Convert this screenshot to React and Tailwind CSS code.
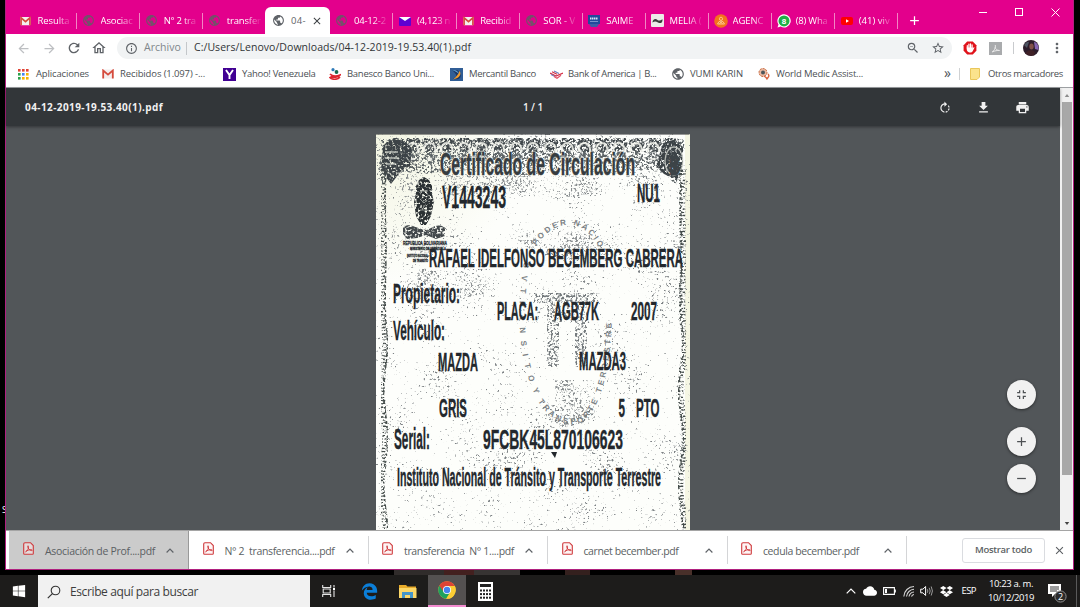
import { useLayoutEffect, useRef, useState } from "react";
import {
  MdPublic, MdRefresh, MdArrowBack, MdArrowForward, MdOutlineHome, MdInfoOutline, MdZoomOut,
  MdStarBorder, MdMoreVert, MdRotateRight, MdFileDownload, MdPrint, MdFullscreenExit, MdAdd,
  MdRemove, MdClose, MdCloud,
} from "react-icons/md";
import { FaDropbox, FaWindows, FaEdgeLegacy } from "react-icons/fa";

function Fit({ w, className = "", children }) {
  const ref = useRef(null);
  const [sp, setSp] = useState(0);
  useLayoutEffect(() => {
    const natural = ref.current.getBoundingClientRect().width;
    const n = ref.current.textContent.length;
    setSp((w - natural) / n);
  }, [w]);
  return (
    <span ref={ref} className={"inline-block shrink-0 whitespace-pre " + className} style={{ letterSpacing: sp + "px" }}>
      {children}
    </span>
  );
}

const Gmail = ({ className }) => (
  <svg viewBox="0 0 12 10" className={className}>
    <rect x="0.5" y="0.5" width="11" height="9" rx="1" fill="#f4eeee" />
    <path d="M1.2 9.5V1.5L6 5.6l4.800-4.100v8" fill="none" stroke="#d54b3d" strokeWidth="1.8" />
  </svg>
);
const Globe = ({ className }) => <MdPublic className={className} />;
const Mail = () => (
  <svg viewBox="0 0 12 10" className="h-[10px] w-3">
    <rect y="1" width="12" height="9" rx="1" fill="#5f01d1" />
    <path d="M0 1h12L6 5z" fill="#fff" />
  </svg>
);
const Saime = () => (
  <svg viewBox="0 0 12 12" className="h-3 w-3">
    <rect width="12" height="9" fill="#214a9c" />
    <path d="M1 9h10L9 12H3z" fill="#3c5da8" />
    <path d="M2 3.500h8" stroke="#d7e1f5" strokeWidth="1.800" strokeDasharray="1.5 .5" />
    <path d="M2 6.500h8" stroke="#8fa6d6" strokeWidth=".8" />
  </svg>
);
const Melia = () => (
  <svg viewBox="0 0 13 13" className="h-[13px] w-[13px]">
    <rect width="13" height="13" rx="1" fill="#eceae8" />
    <path d="M1.500 8.500c0-3 3-4.500 5-2.500 1.500 1.200 3 .5 5-.8 .3 3.500-2 4.800-4.500 3.300-2-1.200-3.500-1.500-5.500 0z" fill="#3a3a3a" />
  </svg>
);
const Agenc = () => (
  <svg viewBox="0 0 14 14" className="h-[14px] w-[14px]">
    <circle cx="7" cy="7" r="6.800" fill="#f4731c" />
    <circle cx="7" cy="4.800" r="1.600" fill="none" stroke="#fbc48b" />
    <path d="M3.500 10q1-3 3.500-3t3.500 3zM5.500 10l1.500-2 1.500 2" stroke="#fbc48b" fill="none" />
  </svg>
);
const Whats = () => (
  <svg viewBox="0 0 14 14" className="h-[14px] w-[14px]">
    <path d="M7 .3a6.600 6.600 0 1 1-3.200 12.300L.5 13.500l1-3A6.600 6.600 0 0 1 7 .3z" fill="#fff" />
    <circle cx="7" cy="6.900" r="5.500" fill="#1fae46" />
    <text x="7" y="9.700" textAnchor="middle" fontSize="8" fontWeight="700" fill="#fff" fontFamily="Liberation Sans, sans-serif">8</text>
  </svg>
);
const Tube = () => (
  <svg viewBox="0 0 12 10" className="h-[10px] w-3">
    <rect y="1" width="12" height="8" rx="2" fill="#f00" />
    <path d="M5 3.200v3.600L8 5z" fill="#fff" />
  </svg>
);

const grayGlobe = <Globe className="h-[13px] w-[13px] text-[#74506a]" />;
const tabs = [
  { icon: <Gmail className="h-[10px] w-[11px]" />, text: "Resulta", w: 32 },
  { icon: grayGlobe, text: "Asociac", w: 32 },
  { icon: grayGlobe, text: "N° 2 tra", w: 32 },
  { icon: grayGlobe, text: "transfer", w: 34 },
  { icon: <Globe className="h-[13px] w-[13px] text-[#5f6368]" />, text: "04-", w: 15, active: true },
  { icon: grayGlobe, text: "04-12-2", w: 32 },
  { icon: <Mail />, text: "(4,123 n", w: 33 },
  { icon: <Gmail className="h-[10px] w-[11px]" />, text: "Recibid", w: 31 },
  { icon: grayGlobe, text: "SOR - V", w: 32 },
  { icon: <Saime />, text: "SAIME", w: 27 },
  { icon: <Melia />, text: "MELIA (", w: 32 },
  { icon: <Agenc />, text: "AGENC", w: 31 },
  { icon: <Whats />, text: "(8) Wha", w: 32 },
  { icon: <Tube />, text: "(41) viv", w: 31 },
];

function Tab({ t, divider }) {
  if (t.active)
    return (
      <div className="-ml-px flex h-[27px] w-[65.1px] shrink-0 items-center rounded-t-[6px] bg-white pl-[7px]">
        {t.icon}
        <div className="ml-[6px] w-4 overflow-hidden text-[#5f6368]">
          <Fit w={t.w}>{t.text}</Fit>
        </div>
        <MdClose className="ml-[4px] h-[12px] w-[12px] text-[#3c4043]" />
      </div>
    );
  return (
    <div className="flex h-[27px] w-[63.1px] shrink-0 items-center pl-[5px]">
      <div className="flex w-[14px] shrink-0 justify-center">{t.icon}</div>
      <div className="ml-[5px] w-[34px] shrink-0 overflow-hidden text-white [mask-image:linear-gradient(to_right,#000_55%,rgba(0,0,0,.15)_95%)]">
        <Fit w={t.w}>{t.text}</Fit>
      </div>
      {divider && <div className="ml-[4.500px] h-4 w-px bg-[#f285c4]" />}
    </div>
  );
}

const bookmarks = [
  {
    icon: (
      <svg viewBox="0 0 11 11" className="h-[11px] w-[11px]">
        {["#e04437", "#e04437", "#e04437", "#2ba24c", "#4285f4", "#f4b400", "#2ba24c", "#f4b400", "#f4b400"].map((c, i) => (
          <rect key={i} x={(i % 3) * 4} y={Math.floor(i / 3) * 4} width="2.600" height="2.600" fill={c} />
        ))}
      </svg>
    ), x: 18, tx: 36, text: "Aplicaciones", w: 53,
  },
  { icon: <Gmail className="h-[10px] w-3" />, x: 101.500, tx: 120, text: "Recibidos (1.097) -...", w: 85 },
  {
    icon: (
      <svg viewBox="0 0 13 13" className="h-[13px] w-[13px]">
        <rect width="13" height="13" fill="#410093" />
        <path d="M3 2l3.500 5L10 2M6.500 7v4" stroke="#fff" strokeWidth="1.900" fill="none" />
      </svg>
    ), x: 222.500, tx: 242, text: "Yahoo! Venezuela", w: 73.500,
  },
  {
    icon: (
      <svg viewBox="0 0 12 12" className="h-3 w-3">
        <circle cx="4" cy="1.700" r="1.600" fill="#2e7ab8" />
        <circle cx="7.500" cy="4" r="1.900" fill="#17694e" />
        <path d="M1 6c2 2 6 2.500 10 1-1 2-7 3-9.500 1.500M.5 9c2 3 8 3 10.500 0" stroke="#dd2730" strokeWidth="1.700" fill="none" />
      </svg>
    ), x: 329, tx: 347, text: "Banesco Banco Uni...", w: 87,
  },
  {
    icon: (
      <svg viewBox="0 0 13 13" className="h-[13px] w-[13px]">
        <rect width="13" height="13" fill="#315e96" />
        <path d="M2 2h5c3 2 5 5 3 8-2 2-5 1-7 1 3-2 5-3 1-7z" fill="#1c3764" />
        <path d="M9.500 3c2.300 3 .5 7-6.500 8.500 3-2.500 5-4.500 6.500-8.500z" fill="#f19a2c" />
        <path d="M2 2c4-.5 6 1 7 4-2-2-4-3-7-4z" fill="#5ba0d8" />
      </svg>
    ), x: 449.500, tx: 469, text: "Mercantil Banco", w: 67,
  },
  {
    icon: (
      <svg viewBox="0 0 13 9" className="h-[9px] w-[13px]">
        <path d="M0 3l6 3 7-3M2 1.800l5 2.500" stroke="#d42f45" strokeWidth="1.200" fill="none" />
        <path d="M4 1l5 2.500M1 4.500l4 2" stroke="#6c7fb8" strokeWidth="1.100" />
        <path d="M4 6.500l3 1.800 4-3" stroke="#e0546a" strokeWidth="1.200" fill="none" />
      </svg>
    ), x: 549.500, tx: 568, text: "Bank of America | B...", w: 88.500,
  },
  { icon: <Globe className="h-[14px] w-[14px] text-[#5f6368]" />, x: 670.500, tx: 690, text: "VUMI KARIN", w: 53 },
  {
    icon: (
      <svg viewBox="0 0 12 12" className="h-3 w-3">
        <circle cx="5" cy="4.500" r="4" fill="#e8b7a0" stroke="#c8683c" strokeDasharray="2 1" />
        <circle cx="5" cy="4.500" r="2" fill="#4d575b" />
        <path d="M6 8l4 3M10 6c2 2 0 4-2 5" stroke="#d96643" strokeWidth="1.400" fill="none" />
      </svg>
    ), x: 757.500, tx: 776, text: "World Medic Assist...", w: 87,
  },
];

function Bookmark({ b, prevEnd }) {
  return (
    <div className="flex shrink-0 items-center" style={{ paddingLeft: b.x - prevEnd }}>
      <div className="flex shrink-0 items-center" style={{ width: b.tx - b.x }}>{b.icon}</div>
      <Fit w={b.w}>{b.text}</Fit>
    </div>
  );
}

const Pdf = () => (
  <svg viewBox="0 0 11 13" className="h-[13px] w-[11px] shrink-0">
    <path d="M2 .7h5.500L10.300 3.500v8q0 .8-.8.8H1.500q-.8 0-.8-.8V2q0-1.300 1.300-1.300z" fill="#fdeaea" fillOpacity=".5" stroke="#cf3a3d" strokeWidth="1.100" />
    <path d="M2.500 10c1.800-.9 3.200-3.500 3-5.500-.1-1.200-1-1-.8 0C5 6.500 6.500 8.500 8.700 8.600c.8 0 .8-1-.5-.9-2 0-4 .7-5.500 1.700" fill="none" stroke="#cf3a3d" strokeWidth=".9" />
  </svg>
);
const Up = () => (
  <svg viewBox="0 0 8 5" className="h-[5px] w-2 shrink-0"><path d="M.6 4.500L4 1.100l3.400 3.400" fill="none" stroke="#5f6368" strokeWidth="1.200" /></svg>
);
const downloads = [
  { text: "Asociación de Prof....pdf", w: 110, active: true },
  { text: "N° 2  transferencia....pdf", w: 110 },
  { text: "transferencia  N° 1....pdf", w: 110 },
  { text: "carnet becember.pdf", w: 95 },
  { text: "cedula becember.pdf", w: 96 },
];

function T({ x, y, w, s, c = "#23282d", children }) {
  return (
    <text x={x} y={y} fontSize={s} textLength={w} lengthAdjust="spacingAndGlyphs" fill={c} stroke={c} strokeWidth=".35">
      {children}
    </text>
  );
}

function Noise({ id, freq, k, patch, cut, seed }) {
  return (
    <filter id={id} x="-5%" y="-5%" width="110%" height="110%" colorInterpolationFilters="sRGB">
      <feTurbulence type="fractalNoise" baseFrequency={freq} numOctaves="2" seed={seed} result="n" />
      <feColorMatrix in="n" type="matrix" values="0 0 0 0 0  0 0 0 0 0  0 0 0 0 0  1 0 0 0 0" result="fine" />
      <feTurbulence type="fractalNoise" baseFrequency="0.025" numOctaves="2" seed={seed + 20} result="l" />
      <feColorMatrix in="l" type="matrix" values="0 0 0 0 0  0 0 0 0 0  0 0 0 0 0  1 0 0 0 0" result="coarse" />
      <feComposite in="fine" in2="coarse" operator="arithmetic" k1="0" k2={k} k3={patch} k4={cut} result="m" />
      <feComposite in="SourceGraphic" in2="m" operator="in" result="o" />
      <feGaussianBlur in="o" stdDeviation="0.35" />
    </filter>
  );
}

function wavy(x, amp) {
  let d = `M${x} 170`;
  for (let y = 171; y <= 532; y += 4) {
    const k = y < 320 ? 0.2 : 1;
    d += `L${(x + amp * k * Math.sin((y - 320) / 15)).toFixed(1)} ${y}`;
  }
  return d;
}

function Certificate() {
  return (
    <svg viewBox="376 134 313.5 396" className="h-[396px] w-[313.500px]" fontFamily="'Liberation Sans Narrow','Liberation Sans',sans-serif" fontWeight="700">
      <defs>
        <Noise id="solid" freq="0.4" k={5} patch={0} cut={-1.500} seed={3} />
        <Noise id="heavy" freq="0.42" k={6} patch={0} cut={-2.5} seed={7} />
        <Noise id="mid" freq="0.45" k={6} patch={1} cut={-3.400} seed={8} />
        <Noise id="light" freq="0.42" k={7} patch={3} cut={-6.350} seed={5} />
        <Noise id="patch" freq="0.45" k={6} patch={3} cut={-5.100} seed={12} />
        <radialGradient id="aged" gradientUnits="userSpaceOnUse" cx="376" cy="134" r="150">
          <stop offset="0" stopColor="#f3f5e2" />
          <stop offset="1" stopColor="#fdfefb" />
        </radialGradient>
        <path id="oval-left" d="M524 262C513 330 523 375 540 404C551 420 565 428 582 422C602 409 613 360 612 300" />
        <path id="oval-top" d="M536 246C553 220 585 212 603 256" />
      </defs>
      <rect x="376" y="134" width="314" height="396" fill="url(#aged)" />
      <rect x="685" y="134" width="5" height="396" fill="#f5f6e4" />
      <g filter="url(#light)" fill="#7d8285">
        <rect x="376" y="134" width="314" height="396" />
      </g>
      <g filter="url(#patch)" fill="#888d8f">
        <path d="M395 174h274l-20 12-50 6-40 8-60-8-60 6-40-8zM395 205q10-14 22-8l24 30-6 30-30 6-14-20zM500 235q60-14 120 10l-10 20-60-8zM420 268q60 8 85 4l-10 20-70 12-12-14zM632 190q30 18 50 24v40q-20-20-50-36zM555 380h40v40h-40z" />
      </g>
      <g filter="url(#mid)" fill="#5c6366">
        <path d="M381 139h304l-3 22-6 24-12-12-20-4-30 5-40-4-50 5-60-5-40 4-28-3-14 14-5-20z" />
      </g>
      <g filter="url(#heavy)" fill="#41484c">
        {Array.from({ length: 17 }, (_, i) => (
          <g key={i}>
            <path d={`M${390 + i * 17.200} 138h12l2 6-4 8h-8l-4-8z`} />
            <path d={`M${396 + i * 17.200} 150l7 7-7 8-7-8z`} fill="#5f6669" />
          </g>
        ))}
      </g>
      <g fill="none" stroke="#f4f5ee" strokeWidth="1.900" opacity=".85">
        {Array.from({ length: 15 }, (_, i) => (
          <path key={i} d={`M${407 + i * 17.200} 152v-3a5.500 6 0 0 1 11 0v3M${410 + i * 17.200} 159h5`} />
        ))}
      </g>
      <g filter="url(#solid)" fill="#3c4347">
        <path d="M383 148q2-8 12-8h5q10 3 12 10l-2 16-8 4-11 14-10-14z" />
        <path d="M662 146q3-6 12-5l9 6v24l-6 9-13-6-8-8z" />
      </g>
      <g stroke="#dfe1da" strokeWidth="1.300" opacity=".75" fill="none">
        <path d="M386 152h12M385 158h14M386 164h10" />
        <ellipse cx="674" cy="161" rx="9" ry="14" />
      </g>
      <g fill="none" stroke="#454d4b">
        <path d={wavy(383.500, 2)} strokeWidth="6.500" strokeDasharray="1.600 1.600" filter="url(#heavy)" />
        <path d={wavy(385.500, 2)} strokeWidth="1.800" filter="url(#heavy)" />
        <path d={wavy(682.500, 2.500)} strokeWidth="6.500" strokeDasharray="1.600 1.600" filter="url(#heavy)" />
        <path d={wavy(681, 2.500)} strokeWidth="1.800" filter="url(#heavy)" />
      </g>
      <g fill="#2b3134" filter="url(#solid)">
        <path d="M416 186l3-6 5-3 5 3 3 6v8l2 8-3 14-5 9h-5l-5-9-2-14 2-8z" />
        <path d="M403 228q4-5 10-2l8 3 6 1 8-4q8-2 12 4l-5 2 3 4-9 3-10-4-9 3-10 1-4-5z" fill="#43494c" />
      </g>
      <g fill="none" stroke="#8e938f" strokeWidth="1">
        <path d="M420 191h8M421 200l3 3 3-3M420 210h7" />
      </g>
      <g>
        <T x={403} y={244.500} w={44} s={6}>REPUBLICA BOLIVARIANA</T>
        <T x={410} y={250} w={36} s={4}>MINISTERIO DE VENEZUELA</T>
        <T x={407} y={256.500} w={21} s={4}>INSTITUTO NACIONAL</T>
        <T x={413} y={261.500} w={15} s={3.500}>DE TRANSITO</T>
      </g>
      <g filter="url(#mid)" fill="#73797c">
        <rect x="534" y="293" width="64" height="10" />
        <rect x="547" y="303" width="12" height="64" />
        <rect x="575" y="303" width="12" height="64" />
        <rect x="555" y="310" width="23" height="12" />
        <path d="M540 412q24 18 52-4l-8 14-20 6z" />
      </g>
      <g fontSize="8" fill="#7b8184" fontWeight="700">
        <text letterSpacing="2.800"><textPath href="#oval-left"> S V   T R A N S I T O  Y TRANSPORTE TERRESTRE</textPath></text>
        <text letterSpacing="2.400"><textPath href="#oval-top">PODER NACIO</textPath></text>
      </g>
      <g stroke="#f3f4ed" strokeWidth="2.500" opacity=".55">
        <text x="440" y="175" fontSize="31" textLength="195" lengthAdjust="spacingAndGlyphs" fill="none" aria-hidden="true">Certificado de Circulación</text>
      </g>
      <T x={440} y={175} w={195} s={31} c="#363c40">Certificado de Circulación</T>
      <T x={669} y={175} w={11} s={27} c="#3d4448">B</T>
      <T x={442} y={207.500} w={64} s={32}>V1443243</T>
      <T x={637} y={201.500} w={23} s={26}>NU1</T>
      <T x={429} y={267} w={254} s={26}>RAFAEL IDELFONSO BECEMBERG CABRERA</T>
      <T x={393} y={303} w={67} s={28}>Propietario:</T>
      <T x={497} y={320} w={41} s={25}>PLACA:</T>
      <T x={554} y={319.500} w={45} s={25}>AGB77K</T>
      <T x={631} y={320} w={26} s={25}>2007</T>
      <T x={393} y={339.500} w={52} s={28}>Vehículo:</T>
      <T x={438} y={371} w={40} s={26}>MAZDA</T>
      <T x={579} y={370} w={47} s={26}>MAZDA3</T>
      <T x={439} y={416.500} w={28} s={26}>GRIS</T>
      <T x={618.500} y={416.500} w={6.500} s={26}>5</T>
      <T x={636} y={416.500} w={23.500} s={26}>PTO</T>
      <T x={394} y={449} w={36} s={29}>Serial:</T>
      <T x={483} y={449} w={140} s={28}>9FCBK45L870106623</T>
      <path d="M551 452l6 0-2 6z" fill="#23282c" />
      <T x={397} y={486} w={264} s={25}>Instituto Nacional de Tránsito y Transporte Terrestre</T>
      <path d="M376 134.300h313.500" stroke="#26292b" strokeWidth=".6" />
    </svg>
  );
}

const Round = ({ children, className = "" }) => (
  <div className={"flex h-[29px] w-[29px] items-center justify-center rounded-full bg-[#f1f1f1] text-[#4e5154] shadow-[0_1px_3px_rgba(0,0,0,.5)] " + className}>
    {children}
  </div>
);

export default function App() {
  let end = 6;
  return (
    <div className="flex h-[607px] w-[1080px] flex-col overflow-hidden bg-black font-['Open_Sans','Noto_Sans',sans-serif]">
      <div className="flex h-[569.500px] shrink-0 pr-[6px]">
        <div className="flex w-[5px] shrink-0 items-start justify-end overflow-hidden pt-[504px] text-[9px] leading-[12px] text-white">
          <span className="-mr-[2px]">S</span>
        </div>
        <div className="flex w-[1069px] flex-col border-x border-b border-[#b0207f] bg-white">
          <div className="flex h-[34px] shrink-0 bg-[#e3008c]">
            <div className="flex items-end pl-[7.500px] text-[9.500px] leading-[14px]">
              {tabs.map((t, i) => <Tab key={i} t={t} divider={i !== 3} />)}
              <MdAdd className="mb-[6px] ml-[9px] h-[15px] w-[15px] text-white" />
            </div>
            <div className="ml-auto flex h-6 items-center gap-[28px] pr-[13px]">
              <div className="h-px w-2 bg-white" />
              <div className="h-2 w-2 border border-white" />
              <svg viewBox="0 0 9 9" className="h-[9px] w-[9px]"><path d="M.5.5l8 8m0-8l-8 8" stroke="#fff" strokeWidth="1" /></svg>
            </div>
          </div>
          <div className="flex h-[27px] shrink-0 items-center pl-[10px] pt-px text-[#5f6368]">
            <MdArrowBack className="h-[15px] w-[15px] text-[#bdbfc2]" />
            <MdArrowForward className="ml-[11px] h-[15px] w-[15px] text-[#bdbfc2]" />
            <MdRefresh className="ml-[9px] h-4 w-4" />
            <MdOutlineHome className="ml-[9px] h-4 w-4" />
            <div className="ml-[10px] flex h-[22px] w-[835px] items-center rounded-full bg-[#f1f3f4] pl-2 text-[10.500px]">
              <MdInfoOutline className="h-[13px] w-[13px]" />
              <Fit w={37} className="ml-[6px] text-[#80868b]">Archivo</Fit>
              <div className="ml-[5px] h-[13px] w-px bg-[#c4c7ca]" />
              <Fit w={277} className="ml-[7px] text-[#303336]">C:/Users/Lenovo/Downloads/04-12-2019-19.53.40(1).pdf</Fit>
              <MdZoomOut className="ml-auto h-[14px] w-[14px]" />
              <MdStarBorder className="ml-[11px] mr-[7px] h-[14px] w-[14px]" />
            </div>
            <svg viewBox="0 0 14 14" className="ml-[11px] h-[14px] w-[14px]">
              <path d="M4.200.6h5.600l3.600 3.600v5.600l-3.600 3.600H4.200L.6 9.800V4.200z" fill="#e0131b" />
              <path d="M4.300 7V4.500M5.900 7V3M7.500 7V2.800M9.100 7V3.800" stroke="#fff" strokeWidth="1.200" strokeLinecap="round" />
              <path d="M3.700 6.500h6v1L11 6q.8.300.2 1.200L9.500 10.500q-.6.900-1.800.9H6.500Q3.700 11 3.700 8z" fill="#fff" />
            </svg>
            <svg viewBox="0 0 13 13" className="ml-3 h-[13px] w-[13px]">
              <rect width="13" height="13" fill="#a9abad" />
              <path d="M3 10c2-1 4-4 3.300-7M6 5c.5 2 2 3.500 4.500 3.500-2-.3-5 .3-7 1.500" fill="none" stroke="#e9e9e9" />
            </svg>
            <div className="ml-[11px] h-3 w-px bg-[#c9cbce]" />
            <svg viewBox="0 0 16 16" className="ml-[9px] h-4 w-4">
              <circle cx="8" cy="8" r="8" fill="#2c1c2b" />
              <path d="M11 1.500A8 8 0 0 1 15.500 10L12 9z" fill="#8866b5" />
              <ellipse cx="8.500" cy="6.500" rx="2.200" ry="3" fill="#80504a" />
              <path d="M2 13.300q6-6 10-1l-1 3q-5 1.500-9-2z" fill="#3f2026" />
              <path d="M1 5q3-4 5-3L4 8z" fill="#4c5361" />
            </svg>
            <MdMoreVert className="ml-[10px] h-4 w-4" />
          </div>
          <div className="flex h-[27px] shrink-0 items-center border-b border-[#9da0a3] text-[9.500px] text-[#4b4f53]">
            {bookmarks.map((b, i) => {
              const prev = end;
              end = b.tx + b.w;
              return <Bookmark key={i} b={b} prevEnd={prev} />;
            })}
            <div className="ml-auto flex items-center pr-[10px]">
              <span className="pb-[2px] text-[14px] leading-none">»</span>
              <div className="ml-[8px] h-3 w-px bg-[#cfd1d3]" />
              <svg viewBox="0 0 10 12" className="ml-[10px] h-[12px] w-[10px]">
                <path d="M.5.5h9V9l-2.500 2.500H.5z" fill="#fbe38c" stroke="#e9c65a" />
              </svg>
              <Fit w={75} className="ml-[8px]">Otros marcadores</Fit>
            </div>
          </div>
          <div className="flex h-[442px] shrink-0">
            <div className="flex min-w-0 flex-1 flex-col bg-[#525659]">
              <div className="z-10 flex h-[38px] shrink-0 items-center bg-[#323639] pt-px text-[10px] font-bold text-[#f1f1f1] shadow-[0_1px_3px_rgba(0,0,0,.4)]">
                <Fit w={138} className="ml-[19px]">04-12-2019-19.53.40(1).pdf</Fit>
                <Fit w={20} className="ml-[360px] font-semibold">1 / 1</Fit>
                <div className="ml-auto flex items-center gap-6 pr-[30px]">
                  <MdRotateRight className="h-[14px] w-[14px]" />
                  <MdFileDownload className="h-[15px] w-[15px]" />
                  <MdPrint className="h-[15px] w-[15px]" />
                </div>
              </div>
              <div className="relative flex h-[404px] justify-start overflow-hidden pl-[370px] pt-[8px]">
                <Certificate />
                <div className="absolute right-[24px] top-[254px]">
                  <Round><MdFullscreenExit className="h-[15px] w-[15px]" /></Round>
                  <Round className="mt-[18px]"><MdAdd className="h-[15px] w-[15px]" /></Round>
                  <Round className="mt-[7.500px]"><MdRemove className="h-[15px] w-[15px]" /></Round>
                </div>
              </div>
            </div>
            <div className="flex w-[13px] flex-col items-center bg-[#f1f1f1]">
              <svg viewBox="0 0 6 4" className="mt-[6px] h-[3px] w-[6px]"><path d="M0 4l3-4 3 4z" fill="#8d8d8d" /></svg>
              <div className="mt-[5px] h-[373px] w-[10px] bg-[#a8a8a8]" />
              <svg viewBox="0 0 6 4" className="mb-[5px] mt-auto h-[3px] w-[6px]"><path d="M0 0l3 4 3-4z" fill="#444" /></svg>
            </div>
          </div>
          <div className="flex flex-1 items-center border-t border-[#a5a5a5] text-[10.500px] text-[#5b5f63]">
            {downloads.map((d, i) => (
              <div
                key={i}
                className={
                  d.active
                    ? "ml-[3px] flex h-[38px] w-[180px] shrink-0 items-center border-r border-[#999] bg-[#cbcbcb] pl-[14px]"
                    : "flex h-7 w-[179.500px] shrink-0 items-center border-r border-[#d4d5d7] pl-[13.500px]"
                }
              >
                <div className="pb-[4px]"><Pdf /></div>
                <div className="ml-[11px] w-[121px] pt-[4px]"><Fit w={d.w}>{d.text}</Fit></div>
                <Up />
              </div>
            ))}
            <div className="ml-auto flex h-[25px] w-[83px] items-center justify-center rounded-[3px] border border-[#dadce0] text-[9.500px] font-semibold">
              <Fit w={57}>Mostrar todo</Fit>
            </div>
            <MdClose className="ml-2 mr-[7px] h-[13px] w-[13px]" />
          </div>
        </div>
      </div>
      <div className="flex h-[5.500px] shrink-0 pl-[394px]">
        <div className="h-full w-[50px] bg-[#302c2b]" />
        <div className="h-full w-[30px] bg-[#43201f]" />
        <div className="h-full w-[46px] bg-[#373433]" />
        <div className="ml-[45px] h-full w-[25px] bg-[#34201e]" />
        <div className="ml-[85px] h-full w-[17px] bg-[#49302a]" />
      </div>
      <div className="flex h-8 shrink-0 items-center bg-[#1d1c1b] text-white">
        <div className="flex w-[38px] justify-center"><FaWindows className="h-[14px] w-[14px]" /></div>
        <div className="flex h-full w-[272px] items-center bg-[#f1f1f1] pl-[9px] pt-px text-[12px] text-[#3d3d3d]">
          <svg viewBox="0 0 14 14" className="h-[14px] w-[14px]">
            <circle cx="8.500" cy="5.500" r="4.300" fill="none" stroke="#333" strokeWidth="1.100" />
            <path d="M5.400 8.600L.8 13.200" stroke="#333" strokeWidth="1.200" />
          </svg>
          <Fit w={128} className="ml-[9px]">Escribe aquí para buscar</Fit>
        </div>
        <svg viewBox="0 0 14 12" className="ml-[12px] h-3 w-[14px]">
          <path d="M.7 0v2.500h8V0M.7 12V9.500h8V12M1.200 4h7v4h-7zM12 0v2.500M12 6v6" fill="none" stroke="#e6e6e6" strokeWidth="1.100" />
          <rect x="11" y="3" width="2" height="2.300" fill="#fff" />
        </svg>
        <FaEdgeLegacy className="ml-[25px] h-[17px] w-[17px] text-[#0b7ed8]" />
        <svg viewBox="0 0 18 15" className="ml-[21px] h-[15px] w-[18px]">
          <path d="M0 1h7l1.500 1.500H17V14H0z" fill="#e8ab2a" />
          <rect y="4" width="17.500" height="10" fill="#fcd768" />
          <path d="M3 14V8h11v6h-3v-3H6v3z" fill="#4595c9" />
        </svg>
        <div className="ml-[11px] flex h-full w-[38px] items-center justify-center border-b-2 border-[#f38bd0] bg-[#545151]">
          <svg viewBox="0 0 18 18" className="h-[18px] w-[18px]">
            <circle cx="9" cy="9" r="8.700" fill="#fccd34" />
            <path d="M9 9L1.400 4.700A8.700 8.700 0 0 0 8.200 17.700L12.800 11z" fill="#1fa15d" />
            <path d="M9 5h7.700a8.700 8.700 0 0 1-8.500 12.700L12.600 10.500z" fill="#fccd34" />
            <path d="M1.300 4.600L5.300 10.500 9 5h7.700A8.700 8.700 0 0 0 1.300 4.600z" fill="#dd4436" />
            <circle cx="9" cy="9" r="4" fill="#fff" />
            <circle cx="9" cy="9" r="3.200" fill="#4683ee" />
          </svg>
        </div>
        <svg viewBox="0 0 15 19" className="ml-[12px] h-[19px] w-[15px]">
          <rect width="15" height="19" fill="#fff" />
          <rect x="2" y="2" width="11" height="3" fill="#222" />
          {Array.from({ length: 12 }, (_, i) => (
            <rect key={i} x={2 + (i % 4) * 3} y={7.500 + Math.floor(i / 4) * 3.600} width="2" height="2" fill="#222" />
          ))}
        </svg>
        <div className="ml-auto flex h-full items-center">
          <svg viewBox="0 0 10 6" className="h-[6px] w-[10px]"><path d="M.7 5.300L5 1l4.300 4.300" fill="none" stroke="#fff" strokeWidth="1.200" /></svg>
          <MdCloud className="ml-[7px] h-[14px] w-[14px]" />
          <svg viewBox="0 0 13 8" className="ml-[6px] h-2 w-[13px]">
            <path d="M.6.600h10.800v6.800H.6zM12.300 2.500v3" fill="none" stroke="#fff" strokeWidth="1.100" />
            <rect x="2" y="2" width="2" height="4" fill="#fff" />
          </svg>
          <svg viewBox="0 0 12 12" className="ml-[7px] h-3 w-3">
            <path d="M.8 11.500A10.500 10.500 0 0 1 11 1.500M3.500 11.500A8 8 0 0 1 11 4.300M6 11.500A5.500 5.500 0 0 1 11 7M8.500 11.500A3 3 0 0 1 11 9.500" fill="none" stroke="#d5d5d5" strokeWidth="1.100" />
          </svg>
          <svg viewBox="0 0 13 12" className="ml-[5px] h-3 w-[13px]">
            <path d="M.7 4.200h2.200L5.600 1.500v9L2.900 7.800H.7z" fill="none" stroke="#fff" />
            <path d="M7.300 4.200q1.200 1.800 0 3.600M9.200 2.800q2 3.200 0 6.400M11.200 1.500q2.500 4.500 0 9" fill="none" stroke="#aaa" strokeWidth=".9" />
          </svg>
          <FaDropbox className="ml-[7px] h-[13px] w-[13px]" />
          <Fit w={14.500} className="ml-[9px] text-[9.500px]">ESP</Fit>
          <div className="ml-[10px] flex w-[50px] flex-col items-center text-[9.500px] leading-[14px]">
            <Fit w={44}>10:23 a. m.</Fit>
            <Fit w={46}>10/12/2019</Fit>
          </div>
          <div className="ml-[12px] mr-[8px] mt-[5px] h-[19px] w-5">
            <svg viewBox="0 0 20 19" className="h-[19px] w-5">
              <path d="M0 0h13v10H7l-3 3v-3H0z" fill="#fff" />
              <path d="M2 3h9M2 5h9M2 7h7" stroke="#222" strokeWidth=".9" />
              <circle cx="12.500" cy="12.500" r="5.600" fill="#2a2a2a" stroke="#8d8d8d" />
              <text x="12.500" y="15.800" textAnchor="middle" fontSize="9" fill="#fff" fontFamily="Open Sans, sans-serif">2</text>
            </svg>
          </div>
          <div className="h-full w-px bg-[#5a5a5a]" />
          <div className="w-[3px]" />
        </div>
      </div>
    </div>
  );
}
